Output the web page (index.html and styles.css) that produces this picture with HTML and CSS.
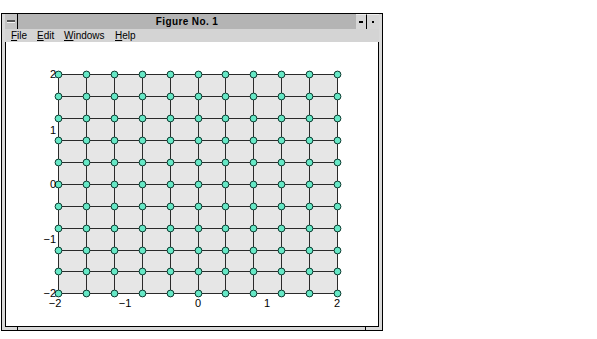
FILE: index.html
```html
<!DOCTYPE html>
<html lang="en">
<head>
    <meta charset="UTF-8">
    <title>Figure No. 1</title>
    <link rel="stylesheet" href="styles.css">
</head>
<body>
    <div class="window">
        <div class="titlebar">
            <div class="sysmenu"><span class="sysbar"></span></div>
            <div class="title">Figure No. 1</div>
            <div class="tbtn min"><span class="min-glyph"></span></div>
            <div class="tbtn max"><span class="max-glyph"></span></div>
        </div>
        <div class="menubar">
            <span class="menu-item file"><u>F</u>ile</span>
            <span class="menu-item edit"><u>E</u>dit</span>
            <span class="menu-item windows"><u>W</u>indows</span>
            <span class="menu-item help"><u>H</u>elp</span>
        </div>
        <div class="canvas">
            <svg id="plot" width="372" height="284" viewBox="6 42 372 284">
                <g id="mesh"></g>
                <g class="labels">
                    <text x="56" y="78" text-anchor="end">2</text>
                    <text x="56" y="134" text-anchor="end">1</text>
                    <text x="56" y="188" text-anchor="end">0</text>
                    <text x="56" y="243" text-anchor="end">&#8722;1</text>
                    <text x="56" y="297" text-anchor="end">&#8722;2</text>
                    <text x="55" y="307" text-anchor="middle">&#8722;2</text>
                    <text x="125" y="307" text-anchor="middle">&#8722;1</text>
                    <text x="198" y="307" text-anchor="middle">0</text>
                    <text x="267" y="307" text-anchor="middle">1</text>
                    <text x="337" y="307" text-anchor="middle">2</text>
                </g>
            </svg>
        </div>
    </div>

    <script>
        // mesh -2..2 in steps of 0.4, in page pixels
        const NS = 'http://www.w3.org/2000/svg';
        const mesh = document.getElementById('mesh');
        const xs = [], ys = [];
        for (let i = 0; i <= 10; i++) {
            xs.push(Math.round(58.3 + i * 27.84) + 0.5);
            ys.push(Math.round(74.3 + i * 21.9) + 0.5);
        }

        function add(tag, attrs) {
            const el = document.createElementNS(NS, tag);
            for (const k in attrs) el.setAttribute(k, attrs[k]);
            mesh.appendChild(el);
            return el;
        }

        // grey face of the axes
        add('rect', { x: xs[0], y: ys[0], width: xs[10] - xs[0], height: ys[10] - ys[0], class: 'face' });

        // grid lines
        xs.forEach(x => add('line', { x1: x, y1: ys[0], x2: x, y2: ys[10], class: 'edge' }));
        ys.forEach(y => add('line', { x1: xs[0], y1: y, x2: xs[10], y2: y, class: 'edge' }));

        // markers
        ys.forEach(y => {
            xs.forEach(x => add('circle', { cx: x, cy: y, r: 3.4, class: 'dot' }));
        });
    </script>
</body>
</html>
```

FILE: styles.css
```css
body {
    margin: 0;
    background-color: #fff;
    font-family: 'Liberation Sans', Arial, sans-serif;
}

.window {
    position: relative;
    width: 374px;
    margin: 13px 0 0 1px;
    border: 1px solid #000;
    padding: 0 3px 3px 3px;
    background-color: #d9d9d9;
    display: flex;
    flex-direction: column;
}

/* resize handle marks on the bottom frame */
.window::before,
.window::after {
    content: '';
    position: absolute;
    bottom: 0;
    width: 1px;
    height: 3px;
    background-color: #000;
}

.window::before {
    left: 15px;
}

.window::after {
    right: 16px;
}

.titlebar {
    height: 15px;
    display: flex;
    background-color: #b4b4b4;
}

.sysmenu {
    width: 12px;
    border-right: 1px solid #000;
    background-color: #c4c4c4;
    display: flex;
    align-items: center;
    justify-content: center;
}

.sysbar {
    width: 8px;
    height: 2px;
    background-color: #555;
    border-bottom: 1px solid #f4f4f4;
}

.title {
    flex: 1;
    text-align: center;
    font-size: 10px;
    font-weight: bold;
    letter-spacing: 0.4px;
    line-height: 15px;
    color: #000;
}

.tbtn {
    background-color: #d6d6d6;
    border-top: 1px solid #efefef;
    display: flex;
    align-items: center;
    justify-content: center;
}

.tbtn.min {
    width: 10px;
    border-right: 1px solid #000;
}

.tbtn.max {
    width: 12px;
}

.min-glyph {
    width: 4px;
    height: 2px;
    background-color: #000;
}

.max-glyph {
    width: 2px;
    height: 2px;
    background-color: #000;
}

.menubar {
    height: 13px;
    display: flex;
    align-items: center;
    padding-left: 6px;
    background-color: #d4d4d4;
    font-size: 10px;
    color: #000;
}

.menu-item u {
    text-decoration-thickness: 1px;
    text-underline-offset: 1px;
}

.file {
    width: 26px;
}

.edit {
    width: 27px;
}

.windows {
    width: 51px;
}

.canvas {
    height: 284px;
    border: 1px solid #000;
    border-top: none;
    background-color: #fff;
}

.canvas svg {
    display: block;
}

.face {
    fill: #e6e6e6;
}

.edge {
    stroke: #2a2a2a;
    stroke-width: 1;
}

.dot {
    fill: #66e8c6;
    stroke: #0d3b30;
    stroke-width: 1;
}

.labels text {
    font-family: 'Liberation Sans', Arial, sans-serif;
    font-size: 11px;
    fill: #000;
}
```
